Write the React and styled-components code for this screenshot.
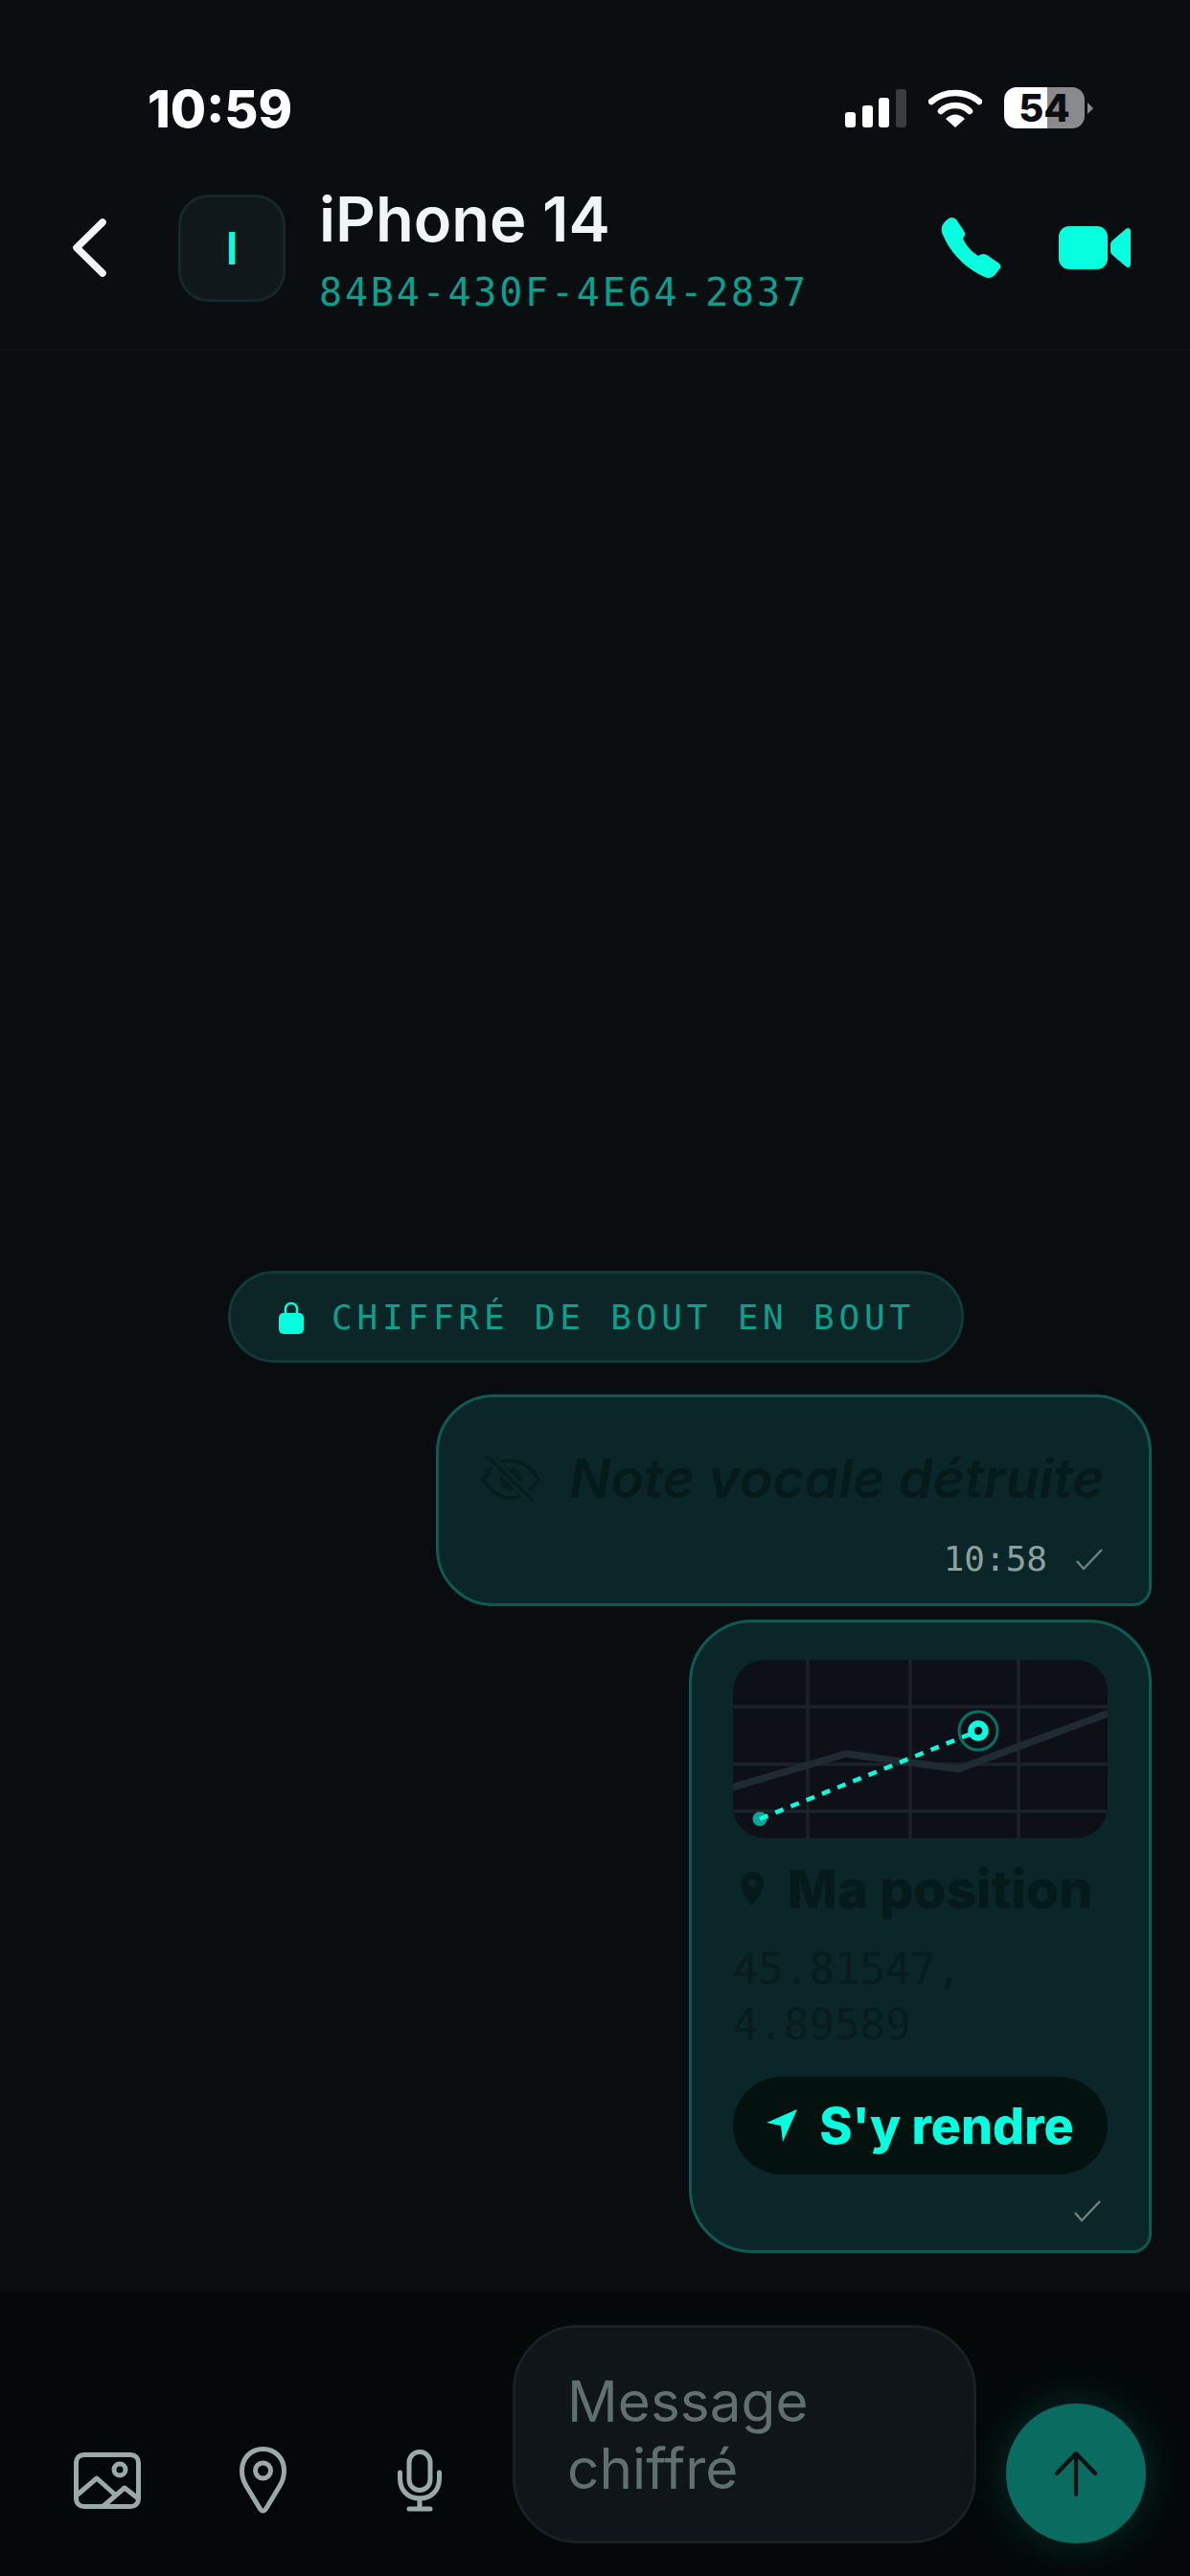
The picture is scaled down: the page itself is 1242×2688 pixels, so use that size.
import React from 'react';
import styled, { createGlobalStyle } from 'styled-components';

const CYAN = '#07ffe0';
const MONO = '"DejaVu Sans Mono", "Liberation Mono", monospace';

function WifiIcon() {
    return (
        <svg width="56" height="40" viewBox="0 0 56 40">
            <path d="M3 13 C17 1 39 1 53 13" fill="none" stroke="#fff" strokeWidth="6.5" strokeLinecap="round" />
            <path d="M13 23 C21 15 35 15 43 23" fill="none" stroke="#fff" strokeWidth="6.5" strokeLinecap="round" />
            <path d="M18 31 C24 25 32 25 38 31 L28 40 Z" fill="#fff" />
        </svg>
    );
}

function PhoneIcon() {
    return (
        <svg width="63" height="65" viewBox="0 0 63 65">
            <path fill={CYAN} d="M8 2 C11 0 14 1 16 3 L24 15 C26 18 25 20 23 23 C26 30 32 37 39 41 C42 39 45 38 48 40 L61 49 C63 51 63 53 61 55 L57 60 C54 64 50 65 46 63 C28 56 10 38 3 21 C-1 14 0 8 8 2 Z" />
        </svg>
    );
}

function VideoIcon() {
    return (
        <svg width="75" height="45" viewBox="0 0 75 45">
            <rect x="0" y="0" width="51" height="45" rx="11" fill={CYAN} />
            <path fill={CYAN} d="M54 19 C54 17 55 16 56 15 L70 3 C72 1 75 2 75 5 L75 40 C75 43 72 44 70 42 L56 30 C55 29 54 28 54 26 Z" />
        </svg>
    );
}

function LockIcon() {
    return (
        <svg width="26" height="35" viewBox="0 0 26 35">
            <path d="M7 15 V9 C7 1 19 1 19 9 V15" fill="none" stroke={CYAN} strokeWidth="2.5" />
            <rect x="0" y="13" width="26" height="22" rx="5" fill={CYAN} />
        </svg>
    );
}

function EyeOffIcon() {
    return (
        <svg width="62" height="49" viewBox="0 0 62 49" fill="none" stroke="#071d1d" strokeWidth="3.6" strokeLinecap="round">
            <path d="M2 24.5 C10 12 20 5 31 5 C42 5 52 12 60 24.5 C52 37 42 44 31 44 C20 44 10 37 2 24.5 Z" strokeLinejoin="round" />
            <circle cx="31" cy="24.5" r="11.5" fill="#071d1d" stroke="none" />
            <path d="M8 2 L54 47" stroke="#0a2628" strokeWidth="10" />
            <path d="M8 2 L54 47" />
        </svg>
    );
}

function SmallPin() {
    return (
        <svg width="24" height="36" viewBox="0 0 24 36">
            <path fillRule="evenodd" fill="#051a19" d="M12 0 C19 0 24 5 24 12 C24 20 16 29 12 36 C8 29 0 20 0 12 C0 5 5 0 12 0 Z M12 8 C9.5 8 7.5 10 7.5 12 C7.5 14 9.5 16 12 16 C14.5 16 16.5 14 16.5 12 C16.5 10 14.5 8 12 8 Z" />
        </svg>
    );
}

function NavIcon() {
    return (
        <svg width="32" height="34" viewBox="0 0 32 34">
            <path fill={CYAN} d="M32 0 L0 14 L15 17 L17 34 Z" />
        </svg>
    );
}

function Check() {
    return (
        <svg width="28" height="24" viewBox="0 0 28 24">
            <path d="M1 14 L8 22 L27 2" fill="none" stroke="#6e7f7c" strokeWidth="2.5" />
        </svg>
    );
}

function MapPreview() {
    return (
        <MapSvg viewBox="0 0 391 186">
            <g stroke="#1b2229" strokeWidth="3.5" fill="none">
                <path d="M78 0 V186 M185 0 V186 M298 0 V186" />
                <path d="M0 49 H391 M0 109 H391 M0 158 H391" />
            </g>
            <path d="M0 133 L118 98 L235 114 L391 56" fill="none" stroke="#202a33" strokeWidth="7.5" />
            <circle cx="28" cy="166" r="7.5" fill="#11a394" />
            <path d="M28 166 L256 74" fill="none" stroke={CYAN} strokeWidth="4.5" strokeDasharray="9 8.5" />
            <circle cx="256" cy="74" r="20" fill="none" stroke="#0b6f66" strokeWidth="3" />
            <circle cx="256" cy="74" r="7.5" fill="#0d1117" stroke={CYAN} strokeWidth="6.5" />
        </MapSvg>
    );
}

function ImageIcon() {
    return (
        <svg width="70" height="59" viewBox="0 0 70 59" fill="none" stroke="#9aaaa8" strokeWidth="5" strokeLinejoin="round" strokeLinecap="round">
            <rect x="2.5" y="2.5" width="65" height="54" rx="8" />
            <circle cx="48" cy="18" r="6" />
            <path d="M4 44 L24 27 L43 44 M31 56 L53 37 L67 48" />
        </svg>
    );
}

function PinIcon() {
    return (
        <svg width="49" height="70" viewBox="0 0 49 70" fill="none" stroke="#9aaaa8" strokeWidth="5">
            <path d="M24.5 67 C23 67 22.5 66 21.5 65 L7 41 C4 36 2.5 31 2.5 25 C2.5 12 12 2.5 24.5 2.5 C37 2.5 46.5 12 46.5 25 C46.5 31 45 36 42 41 L27.5 65 C26.5 66 26 67 24.5 67 Z" strokeLinejoin="round" />
            <circle cx="24.5" cy="25" r="8" />
        </svg>
    );
}

function MicIcon() {
    return (
        <svg width="46" height="65" viewBox="0 0 46 65" fill="none" stroke="#9aaaa8" strokeWidth="5" strokeLinecap="round">
            <rect x="12" y="2.5" width="22" height="40" rx="11" />
            <path d="M2.5 24 V30 C2.5 43 11 51 23 51 C35 51 43.5 43 43.5 30 V24" />
            <path d="M23 51 V62 M12 62 H34" />
        </svg>
    );
}

function ArrowIcon() {
    return (
        <svg width="46" height="48" viewBox="0 0 46 48" fill="none" stroke="#03120f" strokeWidth="4.2" strokeLinecap="round" strokeLinejoin="round">
            <path d="M23 46 V3 M3 24 L23 3 L43 24" />
        </svg>
    );
}

function App() {
    return (
        <>
            <GlobalStyle />
            <Screen>
                <StatusBar>
                    <Clock>10:59</Clock>
                    <StatusIcons>
                        <Signal>
                            <SignalBar $h={16} />
                            <SignalBar $h={23} />
                            <SignalBar $h={31} />
                            <SignalBar $h={40} $off />
                        </Signal>
                        <WifiIcon />
                        <Battery>
                            <BatteryBody>54</BatteryBody>
                            <BatteryCap />
                        </Battery>
                    </StatusIcons>
                </StatusBar>
                <Header>
                    <BackButton>
                        <svg width="36" height="61" viewBox="0 0 36 61">
                            <path d="M32 4 L5 30.5 L32 57" fill="none" stroke="#f0f4f4" strokeWidth="7.5" strokeLinecap="round" strokeLinejoin="round" />
                        </svg>
                    </BackButton>
                    <Avatar>I</Avatar>
                    <Contact>
                        <Name>iPhone 14</Name>
                        <DeviceId>84B4-430F-4E64-2837</DeviceId>
                    </Contact>
                    <Actions>
                        <PhoneIcon />
                        <VideoIcon />
                    </Actions>
                </Header>
                <Messages>
                    <SecurePill>
                        <LockIcon />
                        <span>CHIFFRÉ DE BOUT EN BOUT</span>
                    </SecurePill>
                    <Bubble>
                        <Destroyed>
                            <EyeOffIcon />
                            <span>Note vocale détruite</span>
                        </Destroyed>
                        <Meta>
                            <span>10:58</span>
                            <Check />
                        </Meta>
                    </Bubble>
                    <LocationBubble>
                        <MapPreview />
                        <LocationTitle>
                            <SmallPin />
                            <span>Ma position</span>
                        </LocationTitle>
                        <Coords>45.81547, 4.89589</Coords>
                        <GoButton>
                            <NavIcon />
                            <span>S'y rendre</span>
                        </GoButton>
                        <LocationMeta>
                            <Check />
                        </LocationMeta>
                    </LocationBubble>
                </Messages>
                <Composer>
                    <Tools>
                        <ToolButton><ImageIcon /></ToolButton>
                        <ToolButton><PinIcon /></ToolButton>
                        <ToolButton><MicIcon /></ToolButton>
                    </Tools>
                    <InputBox>Message chiffré</InputBox>
                    <SendButton><ArrowIcon /></SendButton>
                </Composer>
            </Screen>
        </>
    );
}

const GlobalStyle = createGlobalStyle`
  html, body {
    margin: 0;
    padding: 0;
    background: #090d10;
  }
  * {
    box-sizing: border-box;
  }
`;
const Screen = styled.div`
  width: 1242px;
  height: 2688px;
  display: flex;
  flex-direction: column;
  overflow: hidden;
  background: #090d10;
  font-family: Inter, "Liberation Sans", sans-serif;
`;
const StatusBar = styled.div`
  height: 153px;
  padding: 91px 101px 0 154px;
  display: flex;
  justify-content: space-between;
  align-items: flex-start;
  background: #0a0e11;
`;
const Clock = styled.div`
  color: #fff;
  font-size: 54px;
  font-weight: 800;
  line-height: 46px;
`;
const StatusIcons = styled.div`
  display: flex;
  align-items: flex-start;
  gap: 23px;
  margin-top: 2px;
`;
const Signal = styled.div`
  display: flex;
  align-items: flex-end;
  gap: 6.7px;
  height: 40px;
`;
const SignalBar = styled.div`
  width: 11px;
  height: ${p => p.$h}px;
  border-radius: 3px;
  background: ${p => (p.$off ? '#3a3d40' : '#fff')};
`;
const Battery = styled.div`
  display: flex;
  align-items: center;
  gap: 3px;
  margin-top: -2px;
`;
const BatteryBody = styled.div`
  width: 84px;
  height: 43px;
  border-radius: 13px;
  background: linear-gradient(to right, #fff 54%, #8a8a8c 54%);
  color: #0a0e11;
  font-size: 40px;
  font-weight: 800;
  line-height: 43px;
  text-align: center;
`;
const BatteryCap = styled.div`
  width: 0;
  height: 0;
  border-left: 6px solid #8a8a8c;
  border-top: 6px solid transparent;
  border-bottom: 6px solid transparent;
`;
const Header = styled.div`
  height: 213px;
  padding: 0 62px 0 75px;
  display: flex;
  align-items: center;
  background: #0a0e11;
  border-bottom: 2px solid #0f1417;
`;
const BackButton = styled.div`
  width: 36px;
  height: 61px;
  margin-right: 75px;
`;
const Avatar = styled.div`
  width: 112px;
  height: 112px;
  border-radius: 32px;
  background: #10181b;
  border: 3px solid #14282a;
  display: flex;
  align-items: center;
  justify-content: center;
  color: ${CYAN};
  font-size: 46px;
  font-weight: 600;
  margin-right: 35px;
`;
const Contact = styled.div`
  flex: 1;
  display: flex;
  flex-direction: column;
  gap: 18px;
  padding-top: 5px;
`;
const Name = styled.div`
  color: #f0f6f5;
  font-size: 65px;
  font-weight: 600;
  line-height: 70px;
`;
const DeviceId = styled.div`
  color: #0d9e8e;
  font-family: ${MONO};
  font-size: 40px;
  letter-spacing: 2.8px;
  line-height: 46px;
`;
const Actions = styled.div`
  display: flex;
  align-items: center;
  gap: 60px;
`;
const Messages = styled.div`
  flex: 1;
  display: flex;
  flex-direction: column;
  justify-content: flex-end;
  align-items: flex-end;
  padding: 0 40px 41px;
`;
const SecurePill = styled.div`
  align-self: center;
  margin: 0 -2px 33px 0;
  height: 96px;
  padding: 0 48px 0 50px;
  display: flex;
  align-items: center;
  gap: 29px;
  border-radius: 48px;
  background: #0c2628;
  border: 3px solid #103a39;
  color: #0d9e8e;
  font-family: ${MONO};
  font-size: 36px;
  letter-spacing: 4.8px;
  white-space: nowrap;
`;
const Bubble = styled.div`
  width: 747px;
  height: 221px;
  padding: 53px 44px 0;
  border-radius: 60px 60px 20px 60px;
  background: #0a2628;
  border: 3px solid #0e5a52;
  margin-bottom: 14px;
`;
const Destroyed = styled.div`
  display: flex;
  align-items: center;
  gap: 30px;
  color: #061a19;
  font-size: 57px;
  font-style: italic;
  font-weight: 600;
  line-height: 64px;
  white-space: nowrap;
`;
const Meta = styled.div`
  display: flex;
  justify-content: flex-end;
  align-items: center;
  gap: 30px;
  margin-top: 30px;
  color: #8da09e;
  font-family: ${MONO};
  font-size: 36px;
  line-height: 44px;
  padding-right: 4px;
`;
const LocationBubble = styled.div`
  width: 483px;
  height: 661px;
  padding: 39px 43px 0;
  border-radius: 66px 66px 20px 66px;
  background: #0a2628;
  border: 3px solid #0e5a52;
`;
const MapSvg = styled.svg`
  display: block;
  width: 391px;
  height: 186px;
  border-radius: 33px;
  background: #0d1117;
`;
const LocationTitle = styled.div`
  display: flex;
  align-items: center;
  gap: 25px;
  margin-top: 20px;
  padding-left: 8px;
  color: #051a19;
  font-size: 55px;
  font-weight: 800;
  line-height: 66px;
  white-space: nowrap;
`;
const Coords = styled.div`
  margin-top: 22px;
  color: #081b1d;
  font-family: ${MONO};
  font-size: 44px;
  line-height: 58px;
`;
const GoButton = styled.div`
  margin-top: 25px;
  height: 102px;
  border-radius: 51px;
  background: #03110f;
  display: flex;
  align-items: center;
  justify-content: center;
  gap: 23px;
  color: ${CYAN};
  font-size: 52px;
  font-weight: 800;
  white-space: nowrap;
`;
const LocationMeta = styled.div`
  display: flex;
  justify-content: flex-end;
  margin-top: 26px;
  padding-right: 7px;
`;
const Composer = styled.div`
  height: 296px;
  padding: 34px 46px 34px 58px;
  display: flex;
  align-items: flex-end;
  background: #040809;
`;
const Tools = styled.div`
  display: flex;
  gap: 56px;
  margin-right: 44px;
`;
const ToolButton = styled.div`
  width: 107px;
  height: 132px;
  display: flex;
  align-items: center;
  justify-content: center;
`;
const InputBox = styled.div`
  width: 484px;
  height: 228px;
  padding: 42px 54px 0;
  border-radius: 68px;
  background: #0f1518;
  border: 3px solid #1a2023;
  color: #5f706e;
  font-size: 58.5px;
  line-height: 70px;
  margin-right: 31px;
`;
const SendButton = styled.div`
  width: 146px;
  height: 146px;
  border-radius: 50%;
  background: #0a6b60;
  box-shadow: 0 0 44px rgba(10, 107, 96, 0.4);
  display: flex;
  align-items: center;
  justify-content: center;
`;

export default App;
